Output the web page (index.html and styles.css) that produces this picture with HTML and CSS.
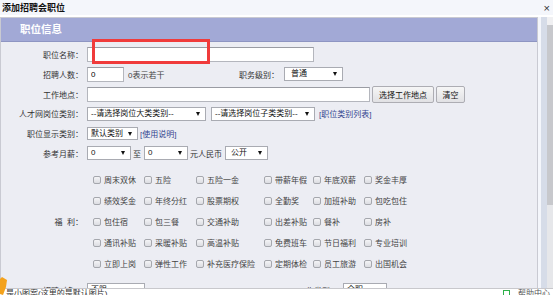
FILE: index.html
```html
<!DOCTYPE html>
<html lang="zh-CN">
<head>
  <meta charset="UTF-8">
  <title>添加招聘会职位</title>
  <link rel="stylesheet" href="styles.css">
</head>
<body>
  <div class="dialog">
    <div class="dialog-title">
      <span>添加招聘会职位</span>
      <span class="close">×</span>
    </div>
    <div class="dialog-body">
      <div class="panel">
        <div class="panel-head">职位信息</div>
        <div class="form">
          <div class="row">
            <label class="lbl">职位名称：</label>
            <input class="txt w-name" type="text">
          </div>
          <div class="row">
            <label class="lbl">招聘人数：</label>
            <input class="txt w-num" type="text" value="0">
            <span class="hint">0表示若干</span>
            <label class="lbl-inline">职务级别：</label>
            <div class="sel w-level">普通</div>
          </div>
          <div class="row">
            <label class="lbl">工作地点：</label>
            <input class="txt w-place" type="text">
            <button class="btn btn-place">选择工作地点</button>
            <button class="btn btn-clear">清空</button>
          </div>
          <div class="row row-short">
            <label class="lbl">人才网岗位类别：</label>
            <div class="sel w-big">--请选择岗位大类类别--</div>
            <div class="sel w-sub">--请选择岗位子类类别--</div>
            <a class="link" href="#">[职位类别列表]</a>
          </div>
          <div class="row">
            <label class="lbl">职位显示类别：</label>
            <div class="sel w-show">默认类别</div>
            <a class="link link-help" href="#">[使用说明]</a>
          </div>
          <div class="row">
            <label class="lbl">参考月薪：</label>
            <div class="sel w-pay">0</div>
            <span class="to">至</span>
            <div class="sel w-pay">0</div>
            <span class="unit">元人民币</span>
            <div class="sel w-open">公开</div>
          </div>

          <div class="welfare">
            <label class="lbl">福&nbsp;&nbsp;利：</label>
            <div class="welfare-grid">
              <label class="cb"><input type="checkbox">周末双休</label>
              <label class="cb"><input type="checkbox">五险</label>
              <label class="cb"><input type="checkbox">五险一金</label>
              <label class="cb"><input type="checkbox">带薪年假</label>
              <label class="cb"><input type="checkbox">年底双薪</label>
              <label class="cb"><input type="checkbox">奖金丰厚</label>

              <label class="cb"><input type="checkbox">绩效奖金</label>
              <label class="cb"><input type="checkbox">年终分红</label>
              <label class="cb"><input type="checkbox">股票期权</label>
              <label class="cb"><input type="checkbox">全勤奖</label>
              <label class="cb"><input type="checkbox">加班补助</label>
              <label class="cb"><input type="checkbox">包吃包住</label>

              <label class="cb"><input type="checkbox">包住宿</label>
              <label class="cb"><input type="checkbox">包三餐</label>
              <label class="cb"><input type="checkbox">交通补助</label>
              <label class="cb"><input type="checkbox">出差补贴</label>
              <label class="cb"><input type="checkbox">餐补</label>
              <label class="cb"><input type="checkbox">房补</label>

              <label class="cb"><input type="checkbox">通讯补贴</label>
              <label class="cb"><input type="checkbox">采暖补贴</label>
              <label class="cb"><input type="checkbox">高温补贴</label>
              <label class="cb"><input type="checkbox">免费班车</label>
              <label class="cb"><input type="checkbox">节日福利</label>
              <label class="cb"><input type="checkbox">专业培训</label>

              <label class="cb"><input type="checkbox">立即上岗</label>
              <label class="cb"><input type="checkbox">弹性工作</label>
              <label class="cb"><input type="checkbox">补充医疗保险</label>
              <label class="cb"><input type="checkbox">定期体检</label>
              <label class="cb"><input type="checkbox">员工旅游</label>
              <label class="cb"><input type="checkbox">出国机会</label>
            </div>
          </div>

          <div class="row row-last">
            <label class="lbl">招聘对象：</label>
            <div class="sel w-target">不限</div>
            <label class="lbl-inline lbl-type">工作类型：</label>
            <div class="sel w-type">全职</div>
          </div>
        </div>
      </div>
      <div class="scrollbar">
        <div class="scroll-strip"></div>
        <div class="scroll-track">
          <div class="scroll-arrow"></div>
          <div class="scroll-thumb"></div>
        </div>
      </div>
    </div>

    <!-- red highlight drawn over the name field -->
    <div class="mark"></div>

    <div class="status">
      <span class="status-text">是小图案(这里的是默认图片)</span>
      <span class="status-right"><i class="status-icon"></i>帮助中心</span>
    </div>
    <svg class="pin" width="8" height="18" viewBox="0 0 8 18">
      <path d="M2 0 L7 3 L6 10 L3 18 L0 17 L0 2 Z" fill="#f4a21c"/>
    </svg>
  </div>
</body>
</html>
```

FILE: styles.css
```css
body {
  margin: 0;
  font-family: "Liberation Sans", "Noto Sans CJK SC", sans-serif;
  font-size: 8px;
  color: #222;
  background-color: #fff;
  overflow: hidden;
}

.dialog {
  position: relative;
  width: 553px;
  height: 295px;
  background-color: #f4f6fb;
  overflow: hidden;
}

.dialog-title {
  display: flex;
  justify-content: space-between;
  align-items: center;
  height: 15px;
  padding: 0 3px 0 2px;
  font-size: 9px;
  font-weight: bold;
  color: #111;
  border-bottom: 2px solid #fff;
}

.close {
  font-size: 11px;
  font-weight: normal;
  color: #333;
}

.dialog-body {
  display: flex;
  height: 278px;
}

.panel {
  width: 536px;
  background-color: #ecedf3;
  border: 1px solid #c9cad2;
  border-bottom: none;
  margin-right: 3px;
  overflow: hidden;
}

.panel-head {
  height: 23px;
  line-height: 23px;
  padding-left: 19px;
  background-color: #a2a9d6;
  border-bottom: 1px solid #8e95c2;
  color: #fff;
  font-size: 10.5px;
  font-weight: bold;
}

.form {
  padding-top: 2px;
}

.row {
  display: flex;
  align-items: center;
  height: 20px;
}

.row-short {
  height: 19px;
}

.lbl {
  width: 82px;
  flex-shrink: 0;
  text-align: right;
  color: #333;
  margin-right: 4px;
}

.lbl-inline {
  color: #333;
  margin-right: 5px;
}

.txt {
  box-sizing: border-box;
  height: 15px;
  padding: 0 3px;
  border: 1px solid #b4b6bd;
  border-top-color: #9a9ca3;
  background-color: #fff;
  font-family: inherit;
  font-size: 8px;
  color: #000;
  outline: none;
}

.w-name { width: 227px; }
.w-num { width: 37px; }
.w-place { width: 283px; }

.hint {
  width: 111px;
  margin-left: 4px;
  color: #444;
}

.sel {
  position: relative;
  box-sizing: border-box;
  height: 14px;
  line-height: 12px;
  padding: 0 12px 0 3px;
  border: 1px solid #a9abb2;
  background-color: #fff;
  color: #111;
  white-space: nowrap;
  overflow: hidden;
}

.sel::after {
  content: "";
  position: absolute;
  right: 5px;
  top: 4px;
  border-left: 2.5px solid transparent;
  border-right: 2.5px solid transparent;
  border-top: 4px solid #111;
}

.w-level { width: 59px; padding-left: 6px; }
.w-big { width: 119px; }
.w-sub { width: 104px; margin-left: 5px; }
.w-show { width: 51px; height: 13px; line-height: 11px; }
.w-pay { width: 44px; }
.w-open { width: 43px; padding-left: 5px; }
.w-target { width: 58px; }
.w-type { width: 44px; }

.btn {
  box-sizing: border-box;
  height: 17px;
  margin-left: 2px;
  padding: 0;
  border: 1px solid #adadb3;
  border-radius: 2px;
  background: linear-gradient(#f6f6f6, #e1e1e4);
  font-family: inherit;
  font-size: 8px;
  color: #111;
}

.btn-place { width: 62px; }
.btn-clear { width: 29px; }

.link {
  margin-left: 4px;
  color: #33458f;
  text-decoration: none;
}

.link-help { margin-left: 2px; }

.to {
  margin: 0 3px 0 2px;
  color: #333;
}

.unit {
  margin: 0 3px 0 2px;
  color: #333;
}

.welfare {
  display: flex;
  align-items: center;
  margin-top: 6px;
}

.welfare .lbl {
  margin-right: 10px;
}

.welfare-grid {
  display: grid;
  grid-template-columns: 51px 52px 68px 49px 51px auto;
  grid-auto-rows: 21px;
}

.cb {
  display: flex;
  align-items: center;
  color: #444;
  white-space: nowrap;
}

.cb input {
  appearance: none;
  -webkit-appearance: none;
  box-sizing: border-box;
  width: 8px;
  height: 8px;
  margin: 0 3px 0 0;
  border: 1px solid #a5a7ad;
  border-radius: 2px;
  background: linear-gradient(#f4f4f6, #dcdde2);
}

.row-last {
  height: 22px;
  margin-top: 5px;
}

.lbl-type {
  margin-left: 153px;
}

.scrollbar {
  display: flex;
  flex: 1;
}

.scroll-strip {
  width: 6px;
  background-color: #d6dce8;
}

.scroll-track {
  flex: 1;
  background-color: #e6e7ea;
}

.scroll-arrow {
  height: 8px;
  background-color: #f0f0f2;
}

.scroll-thumb {
  height: 180px;
  background-color: #c7c8cc;
}

.mark {
  position: absolute;
  left: 92px;
  top: 39px;
  width: 112px;
  height: 19px;
  border: 3px solid #f03b3b;
}

.status {
  position: absolute;
  left: 0;
  right: 0;
  bottom: 0;
  height: 6px;
  display: flex;
  justify-content: space-between;
  align-items: flex-start;
  padding: 0 3px 0 6px;
  background-color: #fff;
  border-top: 1px solid #c8c8cc;
  font-size: 8px;
  line-height: 9px;
  color: #333;
  overflow: hidden;
}

.status-right {
  display: flex;
  align-items: flex-start;
  color: #555;
}

.status-icon {
  width: 7px;
  height: 7px;
  margin: 1px 8px 0 0;
  border: 1px solid #2fb14a;
  box-sizing: border-box;
}

.pin {
  position: absolute;
  left: 0;
  top: 277px;
}
```
